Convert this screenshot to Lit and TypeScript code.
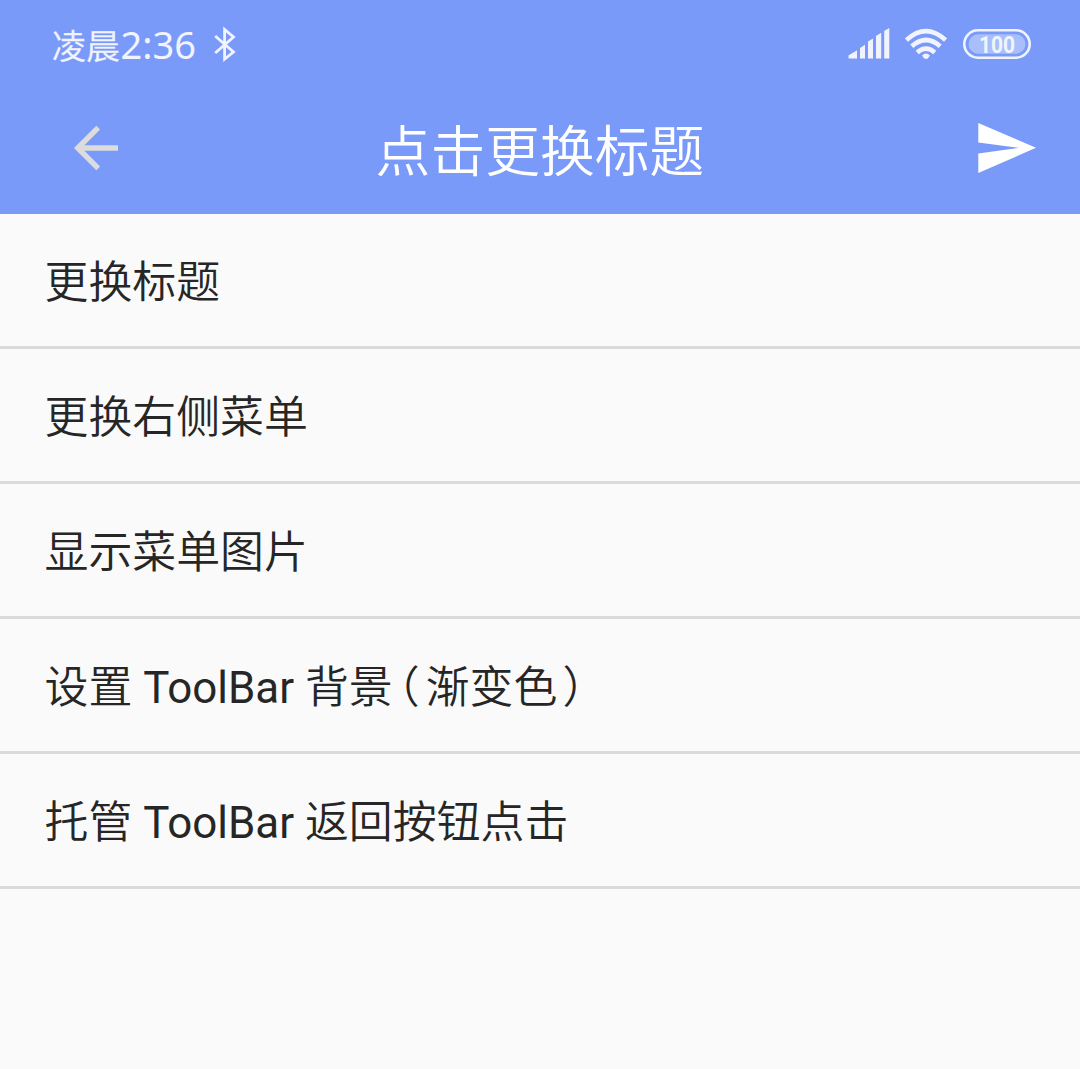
import { LitElement, html, css } from "lit";
import { customElement } from "lit/decorators.js";

@customElement("status-bar")
class StatusBar extends LitElement {
  static styles = css`
    :host {
      display: flex;
      align-items: center;
      height: 88px;
      padding: 0 49px 0 52px;
      box-sizing: border-box;
      color: #f1f4fe;
    }
    .cjk {
      font: 350 34px/50px "Noto Sans CJK SC", sans-serif;
      -webkit-text-stroke: 0.3px #f1f4fe;
      white-space: nowrap;
      margin-top: -1px;
    }
    .digits {
      font: 400 38px/50px "Noto Sans", "Open Sans", sans-serif;
      white-space: nowrap;
      margin-left: 0.5px;
    }
    .clock {
      display: flex;
      align-items: baseline;
      width: 160.5px;
      height: 50px;
      margin-top: 0;
    }
    .icons {
      display: flex;
      align-items: center;
      margin-left: auto;
    }
    svg {
      display: block;
    }
    .signal {
      margin-right: 15px;
    }
    .wifi {
      margin-right: 15px;
    }
    .level {
      font: 700 24px Roboto, sans-serif;
    }
  `;
  render() {
    return html`
      <div class="clock"><span class="cjk">凌晨</span><span class="digits">2:36</span></div>
      <svg class="bt" width="24" height="38" viewBox="212 25 24 38" fill="none" stroke="#f1f4fe" stroke-width="2.8" stroke-linejoin="miter">
        <path d="M214.2 36 L232.5 52 L223.6 59 V29.5 L232.5 37 L214.2 53"></path>
      </svg>
      <div class="icons">
        <svg class="signal" width="42" height="32" viewBox="848 28 42 32" fill="#f1f4fe">
          <path d="M848.5 58.5 V55.5 L857 50.3 V58.5Z M860 58.5 V48 L865 44.8 V58.5Z M868 58.5 V41.5 L873 38.5 V58.5Z M876 58.5 V36 L881.2 32.7 V58.5Z M884.2 58.5 V31 L889.3 28 V58.5Z"></path>
        </svg>
        <svg class="wifi" width="43" height="32" viewBox="905 28 43 32" fill="none" stroke="#f1f4fe" stroke-width="4.6">
          <path d="M906.4 40 Q926 22.2 945.6 40"></path>
          <path d="M911.8 46.2 Q926 33.8 940.2 46.2"></path>
          <path d="M917.2 52.4 Q926 45 934.8 52.4"></path>
          <path d="M922 55.5 Q926 51.5 930 55.5 L927.5 58.8 H924.5Z" fill="#f1f4fe" stroke="none"></path>
        </svg>
        <svg width="68" height="32" viewBox="963 28 68 32">
          <rect x="964.3" y="30.3" width="65.4" height="27.4" rx="13.7" fill="none" stroke="#f1f4fe" stroke-width="2.6"></rect>
          <rect x="968.5" y="34.3" width="57" height="19.4" rx="9.7" fill="#a9bffb"></rect>
          <text class="level" x="979" y="52.7" textLength="36" lengthAdjust="spacingAndGlyphs" fill="#f1f4fe">100</text>
        </svg>
      </div>
    `;
  }
}

@customElement("tool-bar")
class ToolBar extends LitElement {
  static styles = css`
    :host {
      display: grid;
      grid-template-columns: 1fr auto 1fr;
      align-items: center;
      height: 126px;
      padding: 0 43px 0 73px;
      box-sizing: border-box;
    }
    .title {
      font: 350 54.8px/80px "Noto Sans CJK SC", sans-serif;
      color: #fff;
      white-space: nowrap;
      margin-left: -30px;
      padding-bottom: 8px;
    }
    svg {
      display: block;
      margin-bottom: 6px;
    }
    .send {
      justify-self: end;
    }
  `;
  render() {
    return html`
      <svg width="46" height="46" viewBox="73 125 46 46" fill="none" stroke="#dcdcdc" stroke-width="5.4">
        <path d="M118 148 H78 M98.2 127.6 L77.8 148 L98.2 168.4"></path>
      </svg>
      <div class="title">点击更换标题</div>
      <svg class="send" width="60" height="52" viewBox="977 122 60 52" fill="#fff">
        <path d="M978.3 123 L1036 147.8 L978.3 173 V153.5 L1019 147.8 L978.3 142.5Z"></path>
      </svg>
    `;
  }
}

@customElement("app-root")
class AppRoot extends LitElement {
  static styles = css`
    :host {
      display: block;
      height: 1069px;
      overflow: hidden;
      background: #fafafa;
    }
    header {
      background: #7a9afa;
    }
    .row {
      display: flex;
      align-items: center;
      height: 135px;
      padding: 0 44.5px;
      box-sizing: border-box;
      border-bottom: 3px solid #dadada;
      font: 350 43.9px/64px "Noto Sans CJK SC", sans-serif;
      color: #262626;
    }
    .label {
      white-space: pre;
      padding-bottom: 2px;
    }
    .latin {
      font-family: Roboto, sans-serif;
      font-weight: 400;
      line-height: 1;
    }
    .open,
    .close {
      font-feature-settings: "halt";
    }
    .open {
      margin: 0 6px 0 5px;
    }
    .close {
      margin-left: 5px;
    }
  `;
  render() {
    const latin = html`<span class="latin"> ToolBar </span>`;
    const rows = [
      "更换标题",
      "更换右侧菜单",
      "显示菜单图片",
      html`设置${latin}背景<span class="open">（</span>渐变色<span class="close">）</span>`,
      html`托管${latin}返回按钮点击`,
    ];
    return html`
      <header>
        <status-bar></status-bar>
        <tool-bar></tool-bar>
      </header>
      <main>${rows.map((r) => html`<div class="row"><div class="label">${r}</div></div>`)}</main>
    `;
  }
}
